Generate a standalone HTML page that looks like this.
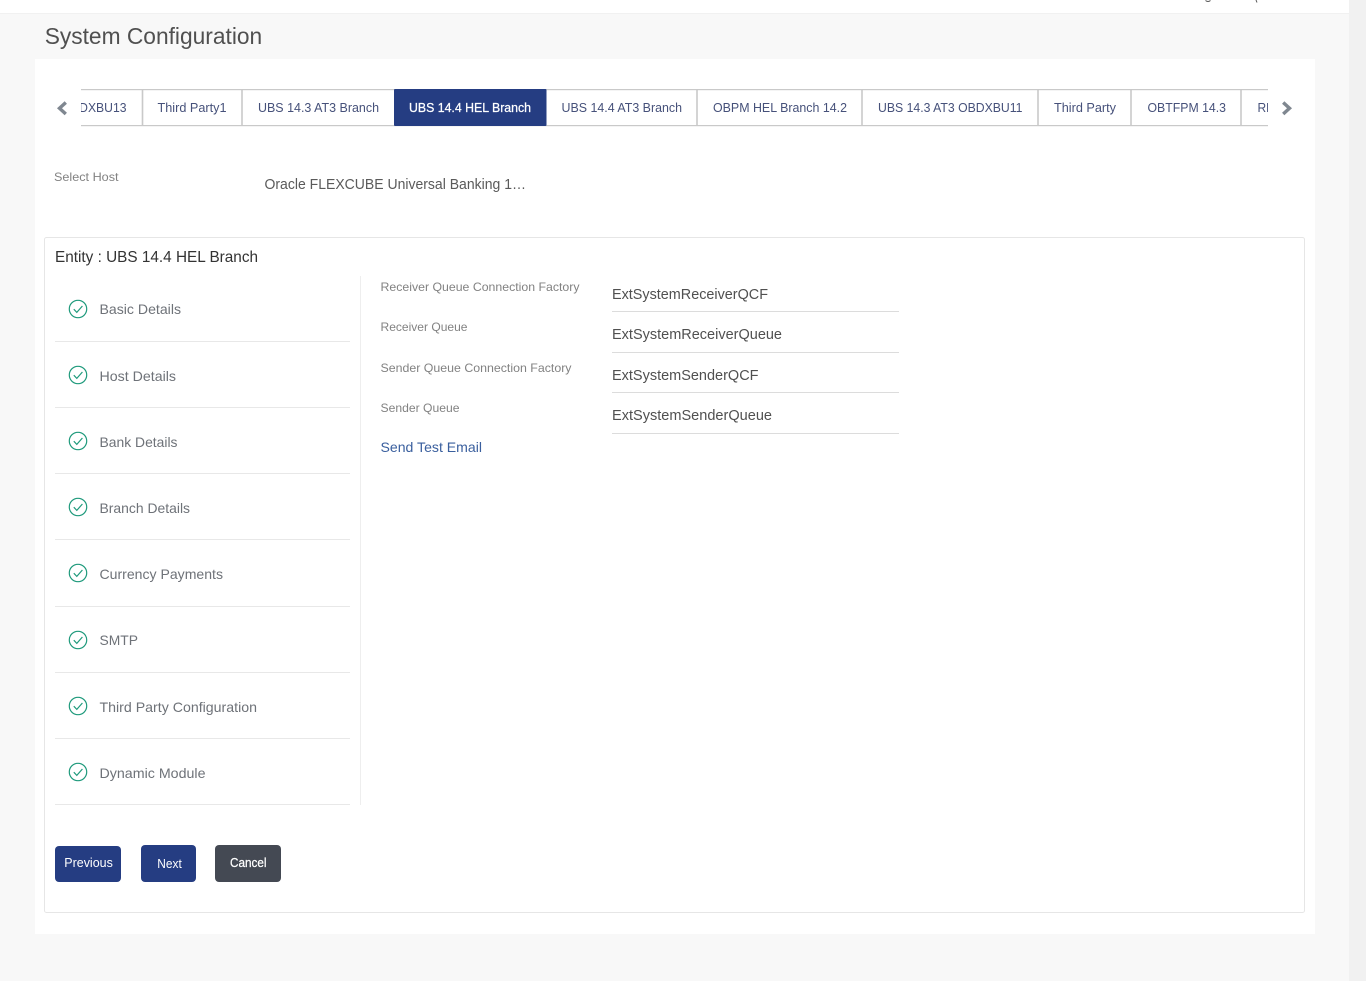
<!DOCTYPE html>
<html lang="en"><head><meta charset="utf-8"><title>System Configuration</title>
<style>
html,body{margin:0;padding:0;width:1366px;height:981px;overflow:hidden;background:#f8f8f8}
svg{display:block;position:absolute;left:0;top:0}
text{font-family:"Liberation Sans",sans-serif;white-space:pre}
.tab{font-size:13px;fill:#46517a}
.nav{font-size:14px;fill:#6e7278}
.lab{font-size:12px;fill:#828282}
.val{font-size:15px;fill:#505050}
.btn{font-size:13px;fill:#fff}
</style></head><body>
<svg width="1366" height="981" viewBox="0 0 1366 981" xmlns="http://www.w3.org/2000/svg">
<defs><clipPath id="tc"><rect x="81" y="85" width="1187" height="45"/></clipPath>
<g id="chk"><circle r="8.7" fill="none" stroke="#1f9a7c" stroke-width="1.2"/><path d="M-4.2 0.2L-1.2 3.4L4.4-3" fill="none" stroke="#1f9a7c" stroke-width="1.2"/></g></defs>
<rect width="1366" height="981" fill="#f8f8f8"/>
<rect width="1349" height="13" fill="#fff"/>
<rect y="13" width="1349" height="1" fill="#f1f1f1"/>
<rect x="1349" width="17" height="981" fill="#f1f1f1"/>
<path d="M1205.500 0.500Q1208 2.500 1210.500 0.500M1256 0L1257 2.500" fill="none" stroke="#555" stroke-width="1"/>
<text x="44.700" y="44" font-size="23" fill="#505050" textLength="217.500" lengthAdjust="spacingAndGlyphs">System Configuration</text>
<rect x="35" y="59" width="1280" height="875" fill="#fff"/>

<path d="M65.800 102.500L59.500 108.300L65.800 114" fill="none" stroke="#7f8790" stroke-width="3.400"/>
<path d="M1283.200 102.500L1289.500 108.300L1283.200 114" fill="none" stroke="#7f8790" stroke-width="3.400"/>
<g clip-path="url(#tc)">
<rect x="81" y="89" width="1187" height="1.200" fill="#c9c9c9"/>
<rect x="81" y="125" width="1187" height="1.200" fill="#c9c9c9"/>
<path d="M142.500 89V126M242 89V126M697 89V126M862 89V126M1038 89V126M1131 89V126M1241 89V126" stroke="#c9c9c9" stroke-width="1.600"/>
<rect x="394" y="89" width="152.500" height="37" rx="1" fill="#253d82"/>
<text class="tab" x="-18" y="112" textLength="144.500" lengthAdjust="spacingAndGlyphs">UBS 14.3 AT3 OBDXBU13</text>
<text class="tab" x="157.500" y="112" textLength="69" lengthAdjust="spacingAndGlyphs">Third Party1</text>
<text class="tab" x="258" y="112" textLength="121" lengthAdjust="spacingAndGlyphs">UBS 14.3 AT3 Branch</text>
<text class="tab" x="409" y="112" textLength="122" lengthAdjust="spacingAndGlyphs" style="fill:#fff;stroke:#fff;stroke-width:.25">UBS 14.4 HEL Branch</text>
<text class="tab" x="561.500" y="112" textLength="120.500" lengthAdjust="spacingAndGlyphs">UBS 14.4 AT3 Branch</text>
<text class="tab" x="713" y="112" textLength="134" lengthAdjust="spacingAndGlyphs">OBPM HEL Branch 14.2</text>
<text class="tab" x="878" y="112" textLength="144.500" lengthAdjust="spacingAndGlyphs">UBS 14.3 AT3 OBDXBU11</text>
<text class="tab" x="1054" y="112" textLength="62" lengthAdjust="spacingAndGlyphs">Third Party</text>
<text class="tab" x="1147.500" y="112" textLength="78.500" lengthAdjust="spacingAndGlyphs">OBTFPM 14.3</text>
<text class="tab" x="1257.500" y="112" textLength="24" lengthAdjust="spacingAndGlyphs">RFS</text>
</g>

<text class="lab" x="54" y="181" textLength="64.500" lengthAdjust="spacingAndGlyphs">Select Host</text>
<text x="264.500" y="189" font-size="15" fill="#5a5a5a" textLength="261.500" lengthAdjust="spacingAndGlyphs">Oracle FLEXCUBE Universal Banking 1…</text>

<rect x="44.500" y="237.500" width="1260" height="675" rx="2" fill="#fff" stroke="#e6e6e6"/>
<text x="55" y="262" font-size="16" fill="#333" textLength="203" lengthAdjust="spacingAndGlyphs">Entity : UBS 14.4 HEL Branch</text>
<rect x="360" y="276" width="1" height="529" fill="#eeeeee"/>

<use href="#chk" x="78" y="309"/><use href="#chk" x="78" y="375"/><use href="#chk" x="78" y="441"/><use href="#chk" x="78" y="507"/><use href="#chk" x="78" y="573"/><use href="#chk" x="78" y="640"/><use href="#chk" x="78" y="706"/><use href="#chk" x="78" y="772"/>
<text class="nav" x="99.500" y="314" textLength="81.500" lengthAdjust="spacingAndGlyphs">Basic Details</text>
<text class="nav" x="99.500" y="381" textLength="76.500" lengthAdjust="spacingAndGlyphs">Host Details</text>
<text class="nav" x="99.500" y="447" textLength="78" lengthAdjust="spacingAndGlyphs">Bank Details</text>
<text class="nav" x="99.500" y="513" textLength="90.500" lengthAdjust="spacingAndGlyphs">Branch Details</text>
<text class="nav" x="99.500" y="579" textLength="123.500" lengthAdjust="spacingAndGlyphs">Currency Payments</text>
<text class="nav" x="99.500" y="645" textLength="38.500" lengthAdjust="spacingAndGlyphs">SMTP</text>
<text class="nav" x="99.500" y="712" textLength="157.500" lengthAdjust="spacingAndGlyphs">Third Party Configuration</text>
<text class="nav" x="99.500" y="778" textLength="106" lengthAdjust="spacingAndGlyphs">Dynamic Module</text>
<g fill="#e8e8e8"><rect x="55" y="341" width="295" height="1"/><rect x="55" y="407" width="295" height="1"/><rect x="55" y="473" width="295" height="1"/><rect x="55" y="539" width="295" height="1"/><rect x="55" y="606" width="295" height="1"/><rect x="55" y="672" width="295" height="1"/><rect x="55" y="738" width="295" height="1"/><rect x="55" y="804" width="295" height="1"/></g>

<text class="lab" x="380.500" y="291" textLength="199" lengthAdjust="spacingAndGlyphs">Receiver Queue Connection Factory</text>
<text class="lab" x="380.500" y="331" textLength="87" lengthAdjust="spacingAndGlyphs">Receiver Queue</text>
<text class="lab" x="380.500" y="372" textLength="191" lengthAdjust="spacingAndGlyphs">Sender Queue Connection Factory</text>
<text class="lab" x="380.500" y="412" textLength="79" lengthAdjust="spacingAndGlyphs">Sender Queue</text>
<text x="380.500" y="452" font-size="14" fill="#3a5f9e" textLength="101.500" lengthAdjust="spacingAndGlyphs">Send Test Email</text>
<text class="val" x="612" y="299" textLength="156" lengthAdjust="spacingAndGlyphs">ExtSystemReceiverQCF</text>
<text class="val" x="612" y="339" textLength="170" lengthAdjust="spacingAndGlyphs">ExtSystemReceiverQueue</text>
<text class="val" x="612" y="380" textLength="146.500" lengthAdjust="spacingAndGlyphs">ExtSystemSenderQCF</text>
<text class="val" x="612" y="420" textLength="160" lengthAdjust="spacingAndGlyphs">ExtSystemSenderQueue</text>
<g fill="#dcdcdc"><rect x="612" y="311" width="287" height="1"/><rect x="612" y="352" width="287" height="1"/><rect x="612" y="392" width="287" height="1"/><rect x="612" y="433" width="287" height="1"/></g>

<rect x="55" y="846" width="66" height="36" rx="4" fill="#253d82"/>
<text class="btn" x="64.300" y="867" textLength="48.500" lengthAdjust="spacingAndGlyphs">Previous</text>
<rect x="141" y="845" width="55" height="37" rx="4" fill="#253d82"/>
<text class="btn" x="157.300" y="868" textLength="24.500" lengthAdjust="spacingAndGlyphs">Next</text>
<rect x="215" y="845" width="66" height="37" rx="4" fill="#444953"/>
<text class="btn" x="230" y="867" textLength="36.500" lengthAdjust="spacingAndGlyphs" style="stroke:#fff;stroke-width:.25">Cancel</text>
</svg>
</body></html>
